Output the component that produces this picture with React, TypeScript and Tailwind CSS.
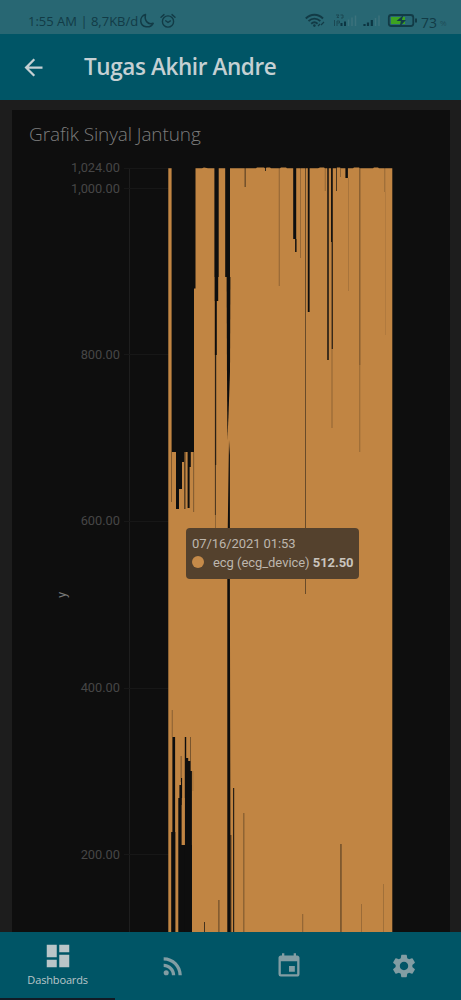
import React from "react";
import {
  MdArrowBack,
  MdDashboard,
  MdEvent,
  MdRssFeed,
  MdSettings,
} from "react-icons/md";

const ticks: [string, number][] = [
  ["1,024.00", 168],
  ["1,000.00", 188.5],
  ["800.00", 354.5],
  ["600.00", 521],
  ["400.00", 688],
  ["200.00", 854.5],
];

// Gaps in the dense signal: x, y, width, height, opacity
const gaps: [number, number, number, number, number][] = [
  [171.6, 167, 22.4, 285, 1],
  [193.5, 167, 2, 121.5, 1],
  [176, 452, 8, 10, 1],
  [176, 452, 6, 37, 1],
  [176, 489, 3, 20, 1],
  [184.3, 452, 1.1, 57, 0.8],
  [187.6, 452, 3.2, 15, 1],
  [187.6, 467, 2, 41, 1],
  [171.2, 452, 0.7, 50, 0.5],
  [193.3, 452, 0.8, 60, 0.45],
  [214.4, 167, 4.3, 110, 1],
  [214.6, 277, 3.6, 24, 1],
  [214.8, 301, 2, 54, 1],
  [214.9, 355, 1.3, 110, 0.85],
  [214.9, 465, 1, 50, 0.7],
  [215, 515, 0.8, 60, 0.35],
  [225.2, 167, 4.8, 110, 1],
  [244.6, 167, 1.1, 20, 0.6],
  [265, 167, 1, 4, 0.8],
  [278.8, 167, 0.8, 119, 0.35],
  [293.2, 167, 3, 72, 1],
  [295, 239, 1.6, 13, 0.9],
  [300, 167, 0.8, 91, 0.3],
  [305, 167, 0.9, 427, 0.55],
  [307.8, 167, 1.8, 145, 1],
  [324.8, 167, 0.8, 24, 0.3],
  [327.2, 167, 1.6, 193, 0.9],
  [331, 167, 1.8, 75, 0.95],
  [331.6, 242, 1.3, 107, 0.85],
  [331.6, 349, 0.8, 79, 0.35],
  [336, 167, 1, 24, 0.65],
  [340.3, 167, 0.7, 10, 0.4],
  [345.4, 167, 2.5, 11, 1],
  [348, 178, 0.7, 113, 0.2],
  [359.4, 167, 0.9, 198, 0.5],
  [359.4, 365, 0.8, 87, 0.3],
  [384.5, 167, 0.7, 25, 0.35],
  [385, 192, 0.6, 143, 0.15],
  [171.8, 710, 0.8, 27, 0.4],
  [172.4, 737, 2.7, 95, 1],
  [171.2, 832, 4.2, 100, 1],
  [180.7, 756, 0.8, 26, 0.5],
  [181, 778, 1.1, 20, 1],
  [179.4, 785, 2.2, 20, 1],
  [178.3, 798, 3.3, 134, 1],
  [179, 845, 12.8, 87, 1],
  [184.8, 737, 1.4, 195, 1],
  [186, 758, 2.2, 174, 1],
  [188, 761, 2.4, 171, 1],
  [190, 771, 1.9, 161, 1],
  [190.1, 737, 0.8, 34, 0.5],
  [192.6, 771, 0.6, 20, 0.25],
  [204, 922, 1, 10, 0.7],
  [218.4, 900, 1, 32, 0.55],
  [233, 788, 1.2, 144, 0.85],
  [230.4, 835, 0.9, 97, 0.85],
  [243.4, 813, 0.9, 119, 0.45],
  [302.3, 914, 0.9, 18, 0.35],
  [340.4, 844, 1.1, 88, 0.6],
  [361.2, 904, 0.7, 28, 0.3],
  [383.3, 884, 0.7, 48, 0.25],
];

const navIcon = "h-7 w-7 text-[#829da3]";

function RoamingSignal() {
  return (
    <svg className="h-4 w-6" viewBox="0 0 24 16">
      <path d="M3 2h3L4 4.500h2M7.500 2H10v3H8M1.500 7v6M4 13V8h2.500v2H4.500" stroke="#1b4853" strokeWidth="1" fill="none" />
      <path d="M8.500 10v3M12 8.500V13" stroke="#0c3542" strokeWidth="2" />
      <path d="M15.500 6.500V13M19 4.500V13M22.500 2.500V13" stroke="#3b727c" strokeWidth="1.500" />
    </svg>
  );
}

function Signal() {
  return (
    <svg className="h-4 w-[18px]" viewBox="0 0 18 16">
      <path d="M1.500 11v2M5 9.500V13M8.800 7V13" stroke="#0c3542" strokeWidth="2.200" />
      <path d="M12.500 5v8M16 2.500V13" stroke="#3b727c" strokeWidth="1.500" />
    </svg>
  );
}

function StatusBar() {
  return (
    <div className="flex h-[34px] shrink-0 items-start bg-[#286773] pl-7 pr-3 pt-[11px] text-[#123b46]">
      <span className="w-[111px] whitespace-nowrap font-['Open_Sans',sans-serif] text-[13px] leading-5 tracking-[0px]">
        1:55 AM | 8,7KB/d
      </span>
      <svg className="mt-0.5 h-4 w-4" viewBox="0 0 16 16" fill="none" stroke="currentColor" strokeWidth="1.5" strokeLinejoin="round">
        <path d="M6.500 1.500C3.500 2.400 1.300 5.300 1.800 8.600c.8 6 9.400 7.200 12.400 1.700C9.700 12 5 8.400 6.500 1.500Z" />
      </svg>
      <svg className="ml-1 mt-0.5 h-4 w-[18px]" viewBox="0 0 18 16" fill="none" stroke="currentColor" strokeWidth="1.4" strokeLinecap="round">
        <circle cx="9" cy="8.500" r="5.600" />
        <path d="m2 4.200 3-2.600M16 4.200l-3-2.600M6.700 7.800 9 9.500l2.400-1.600" />
      </svg>
      <div className="ml-auto flex items-start">
        <svg className="mt-0.5 h-4 w-5" viewBox="0 0 20 16" fill="none" stroke="currentColor" strokeWidth="1.9">
          <path d="M.8 5.500c5-5.100 12.300-5.100 17.200 0M3.500 8.200c3.500-3.500 8.300-3.500 11.800 0M6.200 10.700c2-1.700 4.500-1.700 6.400 0" />
          <circle cx="9.400" cy="12.600" r="1.300" fill="currentColor" stroke="none" />
          <path d="m13 13 2-2M16 12l3-3" strokeWidth="1.200" />
        </svg>
        <div className="ml-2 mt-0.5"><RoamingSignal /></div>
        <div className="ml-1.5 mt-0.5"><Signal /></div>
        <svg className="ml-1.5 mt-0.5 h-4 w-[31px]" viewBox="0 0 31 16">
          <rect x="1.800" y="2" width="24.500" height="11" rx="2.500" fill="#286773" stroke="#123b46" strokeWidth="1.800" />
          <path d="M4 4h14v7H4z" fill="#3da321" />
          <path d="m16.500 2-7 6h4.300l-1 5.500L19 7h-4.200Z" fill="#123b46" />
          <path d="M29 5.500v4" stroke="#123b46" strokeWidth="2" />
        </svg>
        <span className="ml-[3px] w-[17px] font-['Open_Sans',sans-serif] text-[14px] leading-[23px]">73</span>
        <span className="ml-0.5 w-[9px] font-['Open_Sans',sans-serif] text-[8px] leading-6 text-[#1f4d58]">%</span>
      </div>
    </div>
  );
}

function Chart() {
  return (
    <svg className="block h-[777px] w-[438px] shrink-0" viewBox="12 155 438 777">
      <g stroke="#171717" strokeWidth="1">
        <path d="M129.500 168v764" stroke="#1e1e1e" />
        {ticks.map(([label, y]) => (
          <path key={label} d={`M124 ${Math.floor(y) + 0.5}H392`} />
        ))}
      </g>
      <g fill="#464646" fontFamily="Roboto, sans-serif" fontSize="12.800" textAnchor="end">
        {ticks.map(([label, y]) => (
          <text key={label} x="120" y={y + 4.200}>{label}</text>
        ))}
      </g>
      <text transform="translate(65.500 598) rotate(-90)" fill="#777" fontFamily="Roboto, sans-serif" fontSize="13">y</text>

      <path
        fill="#c18543"
        d="M168.300 932V168.300H202l2-.8 4 .8H256l1-.9h7l1 .9 2-.9h3l1 .9h9l1-.8h5l1 .8h31l2-.8h4l1 .8h11l1-.8h3l1 .8h12l1-.8h5l1 .8h13l1-.8h4l1 .8H392.300V932Z"
      />
      <g fill="#0e0e0e">
        {gaps.map(([x, y, width, height, opacity], index) => (
          <rect key={index} x={x} y={y} width={width} height={height} opacity={opacity} />
        ))}
        <path d="M226.600 277H230.400L230 372 228.500 415 227.400 440 227 375Z" />
        <path d="M229 440 229.900 455V594L230.600 932H227.300V560Z" />
      </g>
      <path d="M183.500 798V845" stroke="#c18543" strokeWidth="2.400" />
    </svg>
  );
}

function Tooltip() {
  return (
    <div className="absolute left-[174px] top-[418px] h-[51px] w-[173px] rounded-[4px] bg-[#54412d] pl-1.5 pt-1.5 font-['Roboto',sans-serif] text-[13px] leading-[19px] text-[#bdb6ad]">
      <div className="tracking-[-0.08px]">07/16/2021 01:53</div>
      <div className="flex items-center whitespace-nowrap tracking-[-0.05px]">
        <span className="mr-[9px] h-3 w-3 shrink-0 -translate-y-px rounded-full bg-[#c58a49]" />
        <span>ecg (ecg_device) <b className="text-[#c9c4bd]">512.50</b></span>
      </div>
    </div>
  );
}

export default function App() {
  return (
    <div className="flex h-[1000px] w-[461px] flex-col overflow-hidden bg-[#1d1d1d]">
      <StatusBar />
      <header className="flex h-[66px] shrink-0 items-center bg-[#005566] pl-5 text-[#c5d0d3]">
        <MdArrowBack className="h-[27px] w-[27px]" />
        <h1 className="ml-[37px] whitespace-nowrap font-['Open_Sans',sans-serif] text-[22.5px] font-semibold leading-8 tracking-[-0.4px]">
          Tugas Akhir Andre
        </h1>
      </header>
      <main className="min-h-0 flex-1 px-3 pt-[10px]">
        <section className="relative h-[822px] w-[438px] overflow-hidden bg-[#0e0e0e]">
          <h2 className="h-[45px] pl-[17px] pt-[9px] font-['Open_Sans',sans-serif] text-[19px] font-light leading-[30px] tracking-[-0.1px] text-[#7c7c7c]">
            Grafik Sinyal Jantung
          </h2>
          <Chart />
          <Tooltip />
        </section>
      </main>
      <nav className="flex h-[68px] shrink-0 flex-col bg-[#005566]">
        <div className="grid h-[66px] grid-cols-4">
          <div className="flex flex-col items-center pt-[9px] text-[#bac5c8]">
            <MdDashboard className="h-[30px] w-[30px]" />
            <span className="mt-px font-['Open_Sans',sans-serif] text-[11px] leading-4 tracking-[-0.15px]">Dashboards</span>
          </div>
          <div className="flex items-center justify-center pl-px pt-0.5"><MdRssFeed className={navIcon} /></div>
          <div className="flex items-center justify-center pl-px pt-0.5"><MdEvent className={navIcon} /></div>
          <div className="flex items-center justify-center pl-px pt-0.5"><MdSettings className={navIcon} /></div>
        </div>
        <div className="h-0.5 w-[115px] bg-[#111b25]" />
      </nav>
    </div>
  );
}
